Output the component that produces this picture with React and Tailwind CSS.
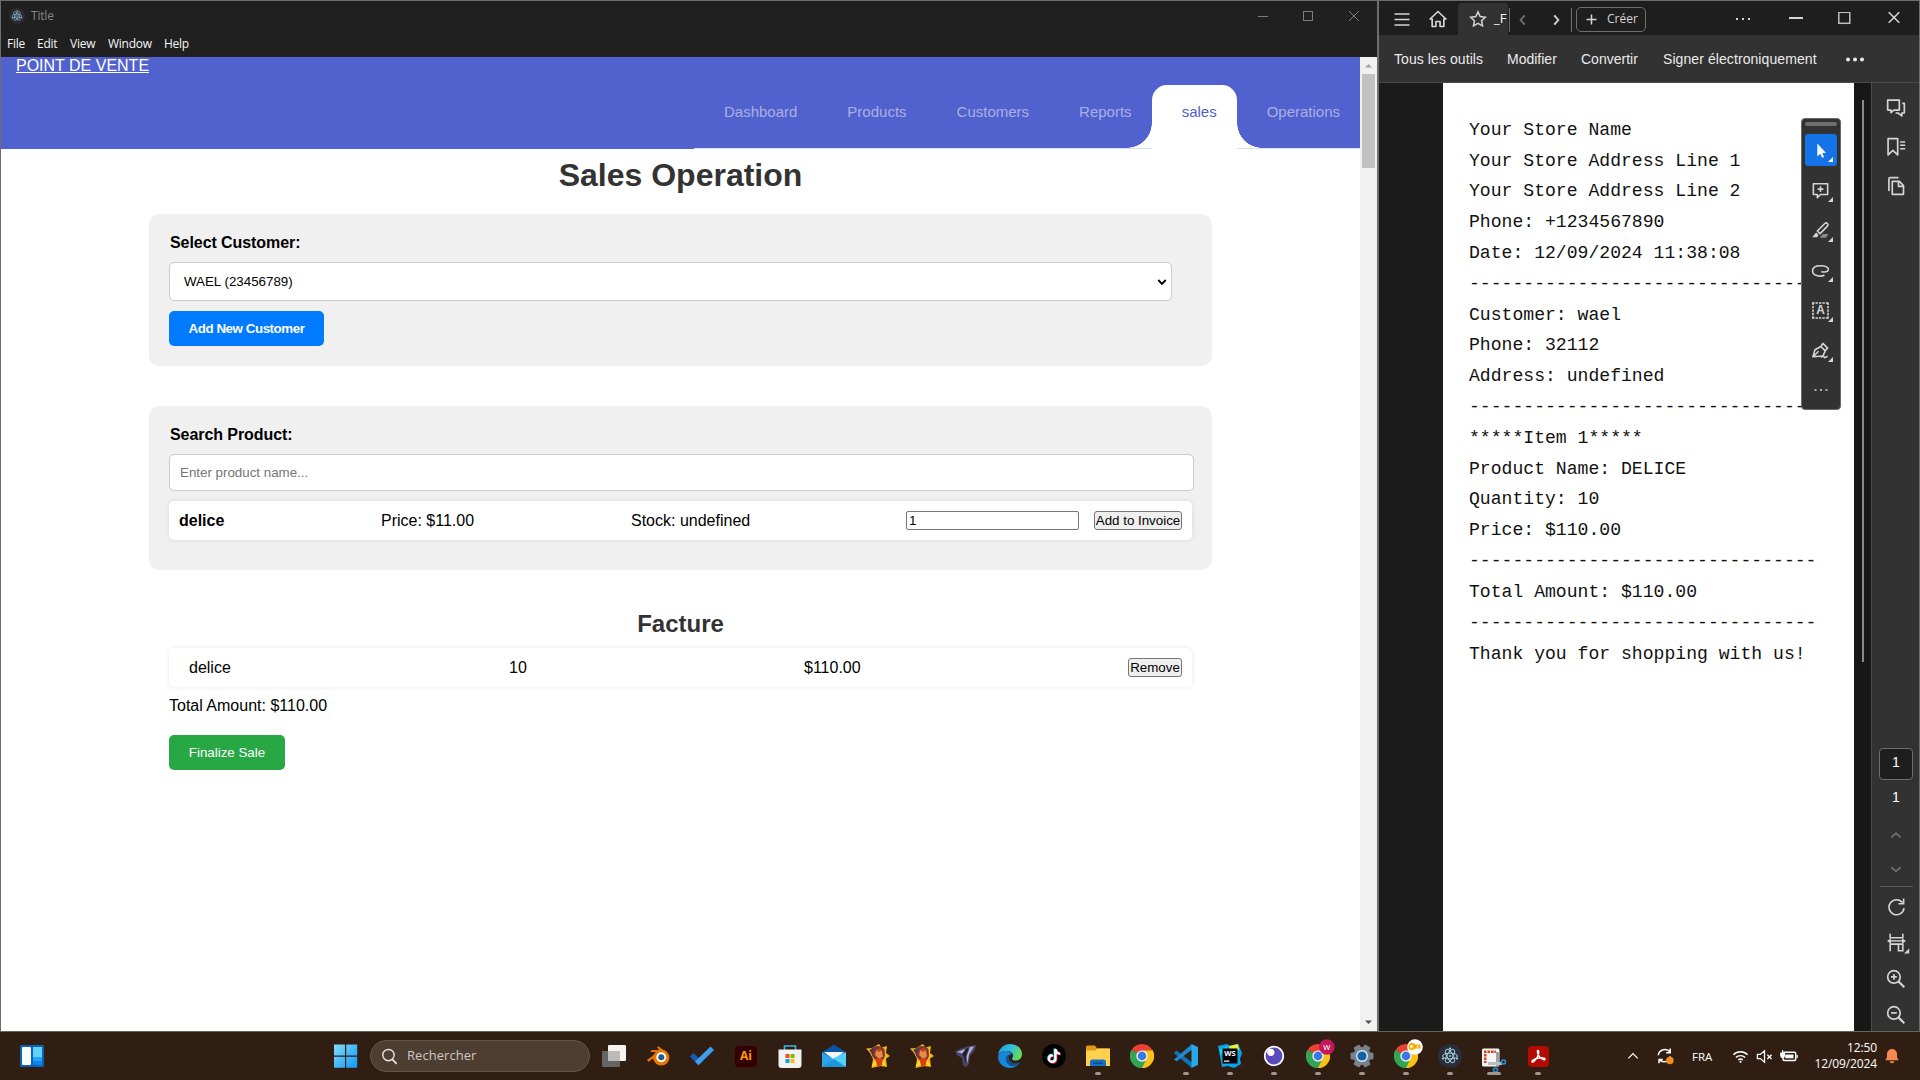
import React from "react";

const UI = "font-['Open_Sans','Noto_Sans',sans-serif]";
const ARIAL = "font-['Liberation_Sans',Arial,sans-serif]";

function Svg({ size = 24, vb = 24, children, className = "" }) {
  return (
    <svg
      width={size}
      height={size}
      viewBox={`0 0 ${vb} ${vb}`}
      fill="none"
      stroke="currentColor"
      strokeWidth="2"
      className={`block shrink-0 ${className}`}
    >
      {children}
    </svg>
  );
}

/* ---------- Logos ---------- */

function ElectronMark({ size, ring = "#9fd0da", bg = "#2b2e3a" }) {
  return (
    <Svg size={size}>
      <circle cx="12" cy="12" r="12" fill={bg} stroke="none" />
      <g stroke={ring} strokeWidth="1">
        <ellipse cx="12" cy="12" rx="7.4" ry="2.9" />
        <ellipse cx="12" cy="12" rx="7.4" ry="2.9" transform="rotate(60 12 12)" />
        <ellipse cx="12" cy="12" rx="7.4" ry="2.9" transform="rotate(120 12 12)" />
      </g>
      <g fill={ring} stroke="none">
        <circle cx="12" cy="12" r="1" />
        <circle cx="5" cy="14.6" r="1.1" />
        <circle cx="19" cy="14.6" r="1.1" />
        <circle cx="12" cy="4.6" r="1.1" />
      </g>
    </Svg>
  );
}

function Chrome({ badge }) {
  return (
    <Svg className="overflow-visible">
      <g stroke="none">
        <path d="M12 12 1.6 6A12 12 0 0 1 22.4 6z" fill="#e94235" />
        <path d="M12 12 22.4 6A12 12 0 0 1 12 24z" fill="#fbbc05" />
        <path d="M12 12V24A12 12 0 0 1 1.6 6z" fill="#33a453" />
        <path d="M12 6.5H22.7A12 12 0 0 1 12 24L17 14.6z" fill="#fbc116" />
        <path d="M1.6 6 7 15l5 2.6 3.6-.8L12 24A12 12 0 0 1 1.6 6z" fill="#33a453" />
        <circle cx="12" cy="12" r="5.6" fill="#fff" />
        <circle cx="12" cy="12" r="4.4" fill="#3b78e7" />
        {badge === "w" && (
          <>
            <circle cx="20.8" cy="3" r="7.8" fill="#c2185b" />
            <text x="20.8" y="5.8" textAnchor="middle" fontSize="9" fill="#fff" fontFamily="Open Sans">w</text>
          </>
        )}
        {badge === "key" && (
          <>
            <circle cx="21" cy="3" r="7.8" fill="#fff" />
            <circle cx="18" cy="2.4" r="3.6" fill="#f9b50b" />
            <circle cx="17.4" cy="2.4" r="1.3" fill="#fff" />
            <path d="M20 .5h6.5v4H20z" fill="#f9a80b" />
            <circle cx="23.500" cy="2.500" r="1" fill="#fff" />
          </>
        )}
      </g>
    </Svg>
  );
}

function TaskView() {
  return (
    <Svg>
      <g stroke="none">
        <rect x="0" y="7" width="18" height="16" rx="1" fill="#676563" />
        <rect x="6" y="1" width="18" height="16" rx="1" fill="#f4f3f2" />
        <rect x="6" y="7" width="12" height="10" fill="#bdbbba" />
      </g>
    </Svg>
  );
}

function Blender() {
  return (
    <Svg>
      <g stroke="none">
        <circle cx="15.3" cy="13.6" r="8" fill="#ea7600" />
        <path d="M1 16 12 8H4.500l1-2h8L11 3.500l1.500-1.200L21 9l-8 7-7-1-3.500 3z" fill="#ea7600" />
        <circle cx="15.3" cy="13.2" r="5" fill="#fff" />
        <circle cx="15.3" cy="13.2" r="3" fill="#265787" />
      </g>
    </Svg>
  );
}

function Todo() {
  return (
    <Svg>
      <g stroke="none">
        <path d="M0 12.500 3.600 9l8.600 8.500-3.700 3.700z" fill="#195abd" />
        <path d="M5 17.500 20.500 2.500 24 6 8.500 21.200z" fill="#3f9ef0" />
      </g>
    </Svg>
  );
}

function Illustrator() {
  return (
    <div className="flex h-[21px] w-[22px] items-center justify-center rounded-[4px] bg-[#330000] font-['Open_Sans',sans-serif] text-[12px] font-bold leading-none text-[#ff9a00]">
      Ai
    </div>
  );
}

function Store() {
  return (
    <Svg>
      <path d="M6.500 6V2h11v4" stroke="#35b5f0" strokeWidth="1.600" />
      <g stroke="none">
        <path d="M.5 5.500h23V21a3 3 0 0 1-3 3h-17a3 3 0 0 1-3-3z" fill="#f3f2f1" />
        <rect x="7.500" y="10" width="4" height="4" fill="#f25022" />
        <rect x="12.500" y="10" width="4" height="4" fill="#7fba00" />
        <rect x="7.500" y="15" width="4" height="4" fill="#00a4ef" />
        <rect x="12.500" y="15" width="4" height="4" fill="#ffb900" />
      </g>
    </Svg>
  );
}

function Mail() {
  return (
    <Svg>
      <g stroke="none">
        <path d="M0 8 12 .8 24 8v6H0z" fill="#0a53a0" />
        <path d="M2 8h20l-10 8z" fill="#f5f5f5" />
        <path d="M0 8v15h24z" fill="#2aa6e8" />
        <path d="M24 8v15L10 15z" fill="#50d0fa" />
        <path d="M0 23 12 15l12 8z" fill="#1f95e0" />
      </g>
    </Svg>
  );
}

function StarMascot() {
  return (
    <Svg>
      <g stroke="none">
        <path d="m13 0 2.500 3.500L21 2l-1 7 4 3-4 2.500 1 8.500-7-1-8.500 2L7 15 4 9 0 4.500 6 4z" fill="#f3b51a" />
        <path d="M5 5C8 1 16 1 18.500 5.500L19 12l-2 4-7 1-4-5z" fill="#7a3a2c" />
        <path d="M10 6.500c2-2 5-1.500 6 .5l1 5.500-4 2.500-4-4z" fill="#e8894a" />
        <path d="M3 6 8 4.500 7 11z" fill="#4b3560" />
        <path d="M10 6c2-2 5-2 6.500 0L13 8z" fill="#c2451c" />
        <path d="m9 15 7-1 2 5-5 4-4-3z" fill="#dd3d12" />
        <path d="m5.500 22 4-6 1.500 5zM17 15.500l3 6.500-4-2z" fill="#ffdf2e" />
      </g>
    </Svg>
  );
}

function Horn() {
  return (
    <Svg>
      <g stroke="none">
        <path d="M1 7.500 6 5l7-2.500L22.500 1l-2.500 6-4.500 5.500L15 20l-3.500 3.500L9 21l-1-7-5-3z" fill="#4a4568" />
        <path d="m3 8 8-3-1.500 5zM16 3l4-.5-5 8-1.500 9-1-7z" fill="#b4aed2" />
        <path d="m8 10 5-6 1.500 1-2.500 6-.5 9-1.500-7z" fill="#201c33" />
      </g>
    </Svg>
  );
}

function Edge() {
  return (
    <Svg>
      <defs>
        <linearGradient id="edgeTop" x1="0" x2="1" y1=".2" y2=".5">
          <stop offset="0" stopColor="#1b9de2" />
          <stop offset=".55" stopColor="#35c1d8" />
          <stop offset="1" stopColor="#6bdc52" />
        </linearGradient>
        <linearGradient id="edgeLow" x1="0" x2=".6" y1="0" y2="1">
          <stop offset="0" stopColor="#1b7fd0" />
          <stop offset="1" stopColor="#1590df" />
        </linearGradient>
      </defs>
      <g stroke="none">
        <path d="M.2 11C1 4 6 0 12 0c7 0 12 4.600 12 10.200 0 4-3 6.300-6.200 6.300-3.400 0-4.300-1.500-3.500-2.700C17 10 12.500 6.500 8.500 7 4 7.300 1 9 .2 11z" fill="url(#edgeTop)" />
        <path d="M.1 12.500C.5 9 4 7 8 7c3.600 0 5.600 2 5.800 3.500C10 10 8 13 9 16.500 10 20.500 16 22 21.500 19 19 22.500 15.500 24 12 24 5 24-.2 18.500.1 12.500z" fill="url(#edgeLow)" />
        <path d="M9.200 11.500C7 14 7.500 19 11.500 21.500c3.500 1.800 8 .5 10.400-2.400.4-.5.1-.9-.5-.6-4 2-10.500.5-10.500-5 0-1 .2-1.800.7-2.400z" fill="#12509a" />
      </g>
    </Svg>
  );
}

function TikTok() {
  const note = "M12.300 5h2.300c.2 2 1.500 3.300 3.400 3.500v2.300c-1.300 0-2.400-.4-3.400-1.100v5a4.400 4.400 0 1 1-4.400-4.400l.7.100v2.300a2.100 2.100 0 1 0 1.400 2z";
  return (
    <Svg>
      <g stroke="none">
        <circle cx="12" cy="12" r="12" fill="#000" />
        <path d={note} fill="#25f4ee" transform="translate(-.7 -.5)" />
        <path d={note} fill="#fe2c55" transform="translate(.8 .6)" />
        <path d={note} fill="#fff" />
      </g>
    </Svg>
  );
}

function Explorer() {
  return (
    <Svg>
      <g stroke="none">
        <path d="M0 3a1.500 1.500 0 0 1 1.500-1.500H9l2 3h11.500A1.500 1.500 0 0 1 24 6v6H0z" fill="#e09a12" />
        <path d="M0 6.500h9l2.500-2H24V22H0z" fill="#ffd04d" />
        <path d="M4 22v-4a2.500 2.500 0 0 1 2.500-2.500h11A2.500 2.500 0 0 1 20 18v4z" fill="#1271c4" />
        <rect x="7" y="18.500" width="10" height="1.500" rx=".7" fill="#0b4a86" />
      </g>
    </Svg>
  );
}

function VSCode() {
  return (
    <Svg>
      <g stroke="none">
        <path d="M0 8.500 2.500 6.500 18 18.500V24L1 10z" fill="#0e76bd" />
        <path d="M0 15.500 2.500 17.500 18 5.500V0z" fill="#1b8ad3" />
        <path d="m17.500 0 6.500 3v18l-6.500 3z" fill="#28a8ea" />
      </g>
    </Svg>
  );
}

function WebStorm() {
  return (
    <Svg>
      <g stroke="none">
        <path d="M0 2 9 0l3 2 8-2 4 9-2 6 1 5-7 4-6-2-6 1L2 12z" fill="#07a5ee" />
        <path d="m11 2 9-2 1 6-9 2z" fill="#e6ef3b" />
        <path d="m2 5 8-3-1 4-7 5z" fill="#21d0e8" />
        <rect x="4.500" y="4.500" width="15" height="15" fill="#000" />
        <rect x="6" y="16.500" width="5.500" height="1.200" fill="#fff" />
        <text x="12" y="12.300" textAnchor="middle" fontSize="7.500" fontWeight="700" fill="#fff" fontFamily="Open Sans">WS</text>
      </g>
    </Svg>
  );
}

function Insomnia() {
  return (
    <Svg>
      <circle cx="12" cy="12" r="9.300" fill="#5849be" stroke="#fff" strokeWidth="1.800" />
      <circle cx="8.800" cy="8.300" r="3.600" fill="#fff" stroke="none" />
    </Svg>
  );
}

function Gear() {
  return (
    <Svg>
      <g stroke="none">
        <g fill="#77828c">
          <circle cx="12" cy="12" r="9" />
          {[0, 60, 120].map((a) => (
            <rect key={a} x="8.500" y="0.500" width="7" height="23" rx="1.500" transform={`rotate(${a + 30} 12 12)`} />
          ))}
        </g>
        <circle cx="12" cy="12" r="6" fill="#e4e8eb" />
        <circle cx="12" cy="12" r="4.600" fill="#0f62ab" />
      </g>
    </Svg>
  );
}

function Snip() {
  return (
    <Svg className="translate-y-[3px] overflow-visible">
      <g stroke="none">
        <rect x="0" y="1.500" width="17.500" height="18" rx="1.500" fill="#f4f4f4" />
        <path d="M2 3.500h2.500v2.500H2zM5.500 3.500H8v2.500H5.500zM9 3.500h2.500v2.500H9zM12.300 3.500h1.500v2.500h-1.500zM2 7h2.500v2.500H2zM2 10.500h2.500V13H2zM2 14h2.500v2H2z" fill="#d83b1b" />
        <path d="M14 5h3v14h-3z" fill="#9ba4aa" />
        <path d="M6 15h14v3H6z" fill="#b8c0c5" />
      </g>
      <circle cx="21.500" cy="15" r="2" stroke="#1d94dc" strokeWidth="1.600" />
      <circle cx="13.500" cy="23" r="2" stroke="#1d94dc" strokeWidth="1.600" />
    </Svg>
  );
}

function Acrobat() {
  return (
    <div className="flex h-[21px] w-[21px] items-center justify-center rounded-[4px] bg-[#b30b00]">
      <Svg size={17}>
        <path
          d="M11 3.500c2.500 0 1.500 5-1 9.500S4.500 21 3 19.800s2-4 8-5.300 10.500-.6 10.200 1.200-3.700 1-7-2.500-4.800-9.700-3.200-9.700z"
          stroke="#fff"
          strokeWidth="1.900"
        />
      </Svg>
    </div>
  );
}

/* ---------- Taskbar ---------- */

const apps = [
  { icon: <TaskView /> },
  { icon: <Blender /> },
  { icon: <Todo /> },
  { icon: <Illustrator /> },
  { icon: <Store /> },
  { icon: <Mail /> },
  { icon: <StarMascot /> },
  { icon: <StarMascot /> },
  { icon: <Horn /> },
  { icon: <Edge /> },
  { icon: <TikTok /> },
  { icon: <Explorer />, run: "w-1.5" },
  { icon: <Chrome /> },
  { icon: <VSCode />, run: "w-1.5" },
  { icon: <WebStorm />, run: "w-1.5" },
  { icon: <Insomnia />, run: "w-1.5" },
  { icon: <Chrome badge="w" />, run: "w-1.5" },
  { icon: <Gear />, run: "w-1.5" },
  { icon: <Chrome badge="key" />, run: "w-1.5" },
  { icon: <ElectronMark size={24} />, run: "w-1.5" },
  { icon: <Snip />, run: "w-3.5" },
  { icon: <Acrobat />, run: "w-1.5" },
];

function Taskbar() {
  return (
    <div className={`flex h-[49px] shrink-0 items-center border-t border-[#6a625d] bg-[#311e12] text-white ${UI}`}>
      <Svg className="ml-5">
        <g stroke="none">
          <rect x="0" y="1" width="24" height="22" rx="1.500" fill="#0b63b8" />
          <rect x="2" y="3" width="9" height="18" rx="1" fill="#fafafa" />
          <rect x="13" y="3" width="9" height="10" fill="#62d2fb" />
          <rect x="13" y="13" width="9" height="4" fill="#1ea5f5" />
          <rect x="13" y="17" width="9" height="4" fill="#0b84ee" />
        </g>
      </Svg>
      <Svg className="ml-[290px]">
        <defs>
          <linearGradient id="win" x1="0" y1="0" x2="24" y2="24" gradientUnits="userSpaceOnUse">
            <stop offset="0" stopColor="#84dcfb" />
            <stop offset="1" stopColor="#0a97f5" />
          </linearGradient>
        </defs>
        <path d="M0 .5h11v11H0zM12.200.5h11v11h-11zM0 12.700h11v11H0zM12.200 12.700h11v11h-11z" fill="url(#win)" stroke="none" />
      </Svg>
      <div className="ml-3 flex h-8 w-[220px] items-center rounded-full border border-[#635348] bg-[#4e3d31] pl-2.5">
        <Svg size={17} className="text-[#e8e4e1]">
          <circle cx="10.500" cy="10" r="8" />
          <path d="m16 16 6 6.500" strokeWidth="2.400" />
        </Svg>
        <span className="ml-[9px] text-[13px] tracking-[0.05px] text-[#cfc9c4]">Rechercher</span>
      </div>
      <div className="ml-0.5 flex">
        {apps.map((a, i) => (
          <div key={i} className="relative flex h-12 w-11 items-center justify-center">
            {a.icon}
            {a.run && <span className={`absolute bottom-[5px] h-[3px] rounded-full bg-[#a0968f] ${a.run}`} />}
          </div>
        ))}
      </div>
      <div className="ml-auto flex h-full items-center">
        <Svg size={14} className="text-white">
          <path d="m4 16 8-8 8 8" />
        </Svg>
        <Svg size={18} className="ml-4 text-white">
          <path d="M3 11a9 9 0 0 1 16-4M19 2v5.500h-5.500M19 12.500A8.500 8.500 0 0 1 4.500 17M4 21.500V16.500h5" />
          <circle cx="18.500" cy="18" r="5" fill="#f58a1f" stroke="none" />
        </Svg>
        <span className="ml-[18px] mt-px w-[23px] text-[11.500px]">FRA</span>
        <Svg size={17} className="ml-[17px]">
          <path d="M2 9.500a14 14 0 0 1 20 0M5.500 13.500a9 9 0 0 1 13 0M8.800 17a4.600 4.600 0 0 1 6.400 0" />
          <circle cx="12" cy="19.500" r="1.500" fill="#fff" stroke="none" />
        </Svg>
        <Svg size={17} className="ml-[7px]">
          <path d="M2 9h4l6-5v16l-6-5H2zM16 9.500l6 6M22 9.500l-6 6" strokeWidth="1.800" />
        </Svg>
        <Svg size={18} className="ml-[7px]">
          <rect x="4" y="7" width="17" height="11" rx="2" />
          <path d="M7 10h11v5H7z" fill="#fff" stroke="none" />
          <path d="M23 10.500v4M3.500 4v4M1 8h5v3.500a2.500 2.500 0 0 1-5 0z" fill="#fff" strokeWidth="1.400" />
        </Svg>
        <div className="ml-3.5 w-[65px] text-right text-[12px] leading-4 tracking-[-0.12px]">
          <div>12:50</div>
          <div>12/09/2024</div>
        </div>
        <Svg size={16} className="ml-[7px] mr-5">
          <path d="M12 1.500a7.500 7.500 0 0 0-7.500 7.500v5L2 18.500h20L19.500 14V9A7.500 7.500 0 0 0 12 1.500zM8.500 20a3.500 3 0 0 0 7 0z" fill="#f5874f" stroke="none" />
        </Svg>
      </div>
    </div>
  );
}

/* ---------- Sales window ---------- */

const tabs = ["Dashboard", "Products", "Customers", "Reports", "sales", "Operations"];

function NavTab({ label }) {
  if (label !== "sales") {
    return (
      <div className="flex h-16 items-center border-b border-[#dee2e6] pb-[9px] pl-[30px] pr-5 text-[15px] text-white/50">
        {label}
      </div>
    );
  }
  return (
    <div className="relative flex h-16 w-[85px] items-center rounded-t-[15px] bg-white pb-2.5 pl-[30px] text-[15px] text-[#5161ce]">
      {label}
      <span className="absolute -left-[25px] bottom-px h-[25px] w-[25px] bg-[radial-gradient(circle_at_0_0,transparent_24.500px,white_25px)]" />
      <span className="absolute -right-[25px] bottom-px h-[25px] w-[25px] bg-[radial-gradient(circle_at_100%_0,transparent_24.500px,white_25px)]" />
    </div>
  );
}

const SMALL_BTN =
  "flex h-[19px] items-center justify-center rounded-[3px] border border-[#767676] bg-[#efefef] text-[13.333px] leading-none text-black";

function SalesWindow() {
  return (
    <div className="flex h-[1031px] w-[1378px] flex-col border-l border-r border-t border-[#6d6d6d] bg-[#202020]">
      <div className={`flex h-7 items-center pl-2 pt-px text-[12px] text-[#868686] ${UI}`}>
        <ElectronMark size={16} bg="#292c37" ring="#8fb4c0" />
        <span className="ml-1.5 tracking-[-0.2px]">Title</span>
        <div className="ml-auto mr-[17px] flex items-center text-[#7c7c7c]">
          <Svg size={12} vb={12}><path d="M1 6.500h10" strokeWidth="1" /></Svg>
          <Svg size={12} vb={12} className="ml-[33px]"><rect x="1.500" y="1.500" width="9" height="9" strokeWidth="1" /></Svg>
          <Svg size={12} vb={12} className="ml-[34px]"><path d="m1 1 10 10M11 1 1 11" strokeWidth="1" /></Svg>
        </div>
      </div>
      <div className={`flex h-7 items-center gap-3 pl-1.5 pt-0.5 text-[12px] tracking-[-0.25px] text-[#f5f5f5] ${UI}`}>
        <span className="w-[18px]">File</span>
        <span className="w-[21px]">Edit</span>
        <span className="w-[26px]">View</span>
        <span className="w-11">Window</span>
        <span className="w-[25px]">Help</span>
      </div>
      <div className={`flex min-h-0 flex-1 bg-white ${ARIAL}`}>
        <div className="flex w-[1359px] flex-col">
          <div className="flex h-[92px] justify-between bg-[#5161ce]">
            <span className="pl-[15px] text-base leading-[18px] text-white underline">POINT DE VENTE</span>
            <div className="mt-7 flex">
              {tabs.map((t) => (
                <NavTab key={t} label={t} />
              ))}
            </div>
          </div>
          <div className="ml-[148px] flex w-[1063px] flex-col">
            <h1 className="mt-2 text-center text-[32px] font-bold leading-[37px] text-[#333]">Sales Operation</h1>

            <section className="mt-5 h-[152px] rounded-[10px] bg-[#f0f0f0] px-5 pt-[19px]">
              <label className="block pl-px text-base font-bold leading-5 tracking-[-0.07px] text-black">Select Customer:</label>
              <div className="mt-[9px] flex h-[39px] w-[1003px] items-center justify-between rounded-[5px] border border-[#ccc] bg-white pl-3.5 pr-1 text-[13.333px] text-black">
                <span>WAEL (23456789)</span>
                <Svg size={10} vb={10}><path d="m1.300 3 3.700 3.800L8.700 3" strokeWidth="1.900" /></Svg>
              </div>
              <button className="mt-2.5 block h-[35px] w-[155px] rounded-[5px] bg-[#007bff] text-[13.333px] font-bold tracking-[-0.44px] text-white">
                Add New Customer
              </button>
            </section>

            <section className="mt-10 h-[164px] rounded-[10px] bg-[#f0f0f0] px-5 pt-[19px]">
              <label className="block pl-px text-base font-bold leading-5 tracking-[-0.07px] text-black">Search Product:</label>
              <div className="mt-[9px] flex h-[37px] w-[1025px] items-center rounded-[5px] border border-[#ccc] bg-white pl-2.5 text-[13.333px] text-[#757575]">
                Enter product name...
              </div>
              <div className="mt-2.5 flex h-[39px] items-center rounded-[5px] bg-white pl-2.5 text-base text-black shadow-[0_0_5px_rgba(0,0,0,0.1)]">
                <span className="w-[202px] font-bold">delice</span>
                <span className="w-[250px]">Price: $11.00</span>
                <span className="w-[275px]">Stock: undefined</span>
                <span className="flex h-[19px] w-[173px] items-center rounded-[2px] border border-[#767676] bg-white pl-0.5 text-[13.333px]">1</span>
                <span className={`ml-[15px] w-[88px] ${SMALL_BTN}`}>Add to Invoice</span>
              </div>
            </section>

            <section className="px-5">
              <h2 className="mt-10 text-center text-2xl font-bold leading-7 text-[#333]">Facture</h2>
              <div className="mt-2.5 flex h-[39px] items-center rounded-[5px] bg-white pl-5 text-base text-black shadow-[0_0_5px_rgba(0,0,0,0.1)]">
                <span className="w-80">delice</span>
                <span className="w-[295px]">10</span>
                <span className="w-[324px]">$110.00</span>
                <span className={`w-[54px] ${SMALL_BTN}`}>Remove</span>
              </div>
              <p className="mt-2.5 text-base leading-[18px] text-black">Total Amount: $110.00</p>
              <button className="mt-5 block h-[35px] w-[116px] rounded-[5px] bg-[#28a745] text-[13.333px] text-white">
                Finalize Sale
              </button>
            </section>
          </div>
        </div>
        <div className="flex w-[17px] flex-col items-center bg-[#f1f1f1]">
          <Svg size={17} vb={17}><path d="M5 10.500h7L8.500 7z" fill="#a3a3a3" stroke="none" /></Svg>
          <div className="h-[94px] w-[13px] bg-[#c1c1c1]" />
          <Svg size={17} vb={17} className="mt-auto"><path d="M5 6.500h7L8.500 10z" fill="#505050" stroke="none" /></Svg>
        </div>
      </div>
    </div>
  );
}

/* ---------- PDF viewer ---------- */

const DASHES = "-".repeat(32);
const receipt = [
  "Your Store Name",
  "Your Store Address Line 1",
  "Your Store Address Line 2",
  "Phone: +1234567890",
  "Date: 12/09/2024 11:38:08",
  DASHES,
  "Customer: wael",
  "Phone: 32112",
  "Address: undefined",
  DASHES,
  "*****Item 1*****",
  "Product Name: DELICE",
  "Quantity: 10",
  "Price: $110.00",
  DASHES,
  "Total Amount: $110.00",
  DASHES,
  "Thank you for shopping with us!",
];

const tools = [
  <path key="s" d="M8 3v16.500l3.700-3.300 2.300 5 2.500-1.100-2.300-5H19z" fill="#fff" stroke="none" />,
  <g key="c">
    <path d="M3 3.500h18v13.500h-9L8 21v-4H3z" strokeLinejoin="round" />
    <path d="M12 6.500v7.500M8.300 10.300h7.400" />
  </g>,
  <g key="h">
    <path d="M11 21 15 16.500h7L19 21z" fill="#8b8b8b" stroke="none" />
    <path d="M17.500 3.200a2.200 2.200 0 0 1 3.200 3.200L11.500 16 8 12.600z" strokeLinejoin="round" />
    <path d="M6.500 14.500 9.500 17.500 8 20.500H1.500z" fill="currentColor" stroke="none" />
  </g>,
  <path key="l" d="M17 18c-6 2.500-15 .5-15-5.500 0-4 4-6.500 10-6.500 6.500 0 10.500 2 10 5-.5 2.500-4 3.300-9 2.500" />,
  <g key="t">
    <path d="M1.500 2.500h21M1.500 21.500h21" strokeDasharray="3 1.300" />
    <path d="M2.500 2v20M21.500 2v20" strokeDasharray="3 1.300" />
    <text x="12" y="17" textAnchor="middle" fontSize="15" fontWeight="700" fill="currentColor" stroke="none" fontFamily="Liberation Sans">A</text>
  </g>,
  <g key="p" strokeLinejoin="round">
    <path d="M2.500 20 5 11l7.500-4 5.500 5.500-3 6.500zM3 19.500l6.500-6.500M12.500 7 15 3l6 6-3.500 3.500" />
    <path d="M13 21c2-3 3-3 3.500-1s1.500 1 4.500-1" />
  </g>,
];

function PdfWindow() {
  return (
    <div className="flex h-[1031px] w-[542px] flex-col border-l border-r border-t border-[#6d6d6d] bg-[#1e1e1e] text-[#d5d5d5]">
      <div className={`flex h-[34px] shrink-0 items-center ${UI}`}>
        <Svg size={16} vb={16} className="ml-[15px] mt-0.5"><path d="M.5 3h15M.5 8.500h15M.5 14h15" strokeWidth="1.600" /></Svg>
        <Svg size={20} className="ml-[18px] mt-0.5">
          <path d="M2.500 12 12 3l9.500 9H19v9h-4.500v-6h-5v6H5v-9z" strokeLinejoin="round" />
        </Svg>
        <div className="ml-2.5 flex h-8 w-[50px] items-center self-end rounded-t-[3px] bg-[#323232]">
          <Svg size={18} className="ml-[11px]">
            <path d="m12 2.500 2.900 6.300 6.800.8-5 4.700 1.300 6.800-6-3.400-6 3.400 1.300-6.800-5-4.700 6.800-.8z" />
          </Svg>
          <span className="ml-[7px] text-[13px] text-white">_F</span>
        </div>
        <span className="ml-px mt-1 h-6 w-px bg-[#6e6e6e]" />
        <Svg size={14} className="ml-[6px] mt-1 text-[#6e6e6e]"><path d="m15 4-7 8 7 8" strokeWidth="3.200" /></Svg>
        <Svg size={14} className="ml-[19px] mt-1"><path d="m9 4 7 8-7 8" strokeWidth="3.200" /></Svg>
        <span className="ml-2 mt-1 h-6 w-px bg-[#6e6e6e]" />
        <div className="ml-1 mt-0.5 flex h-[25px] w-[70px] items-center rounded-[5px] border border-[#6e6e6e] pl-[9px]">
          <Svg size={11} vb={11}><path d="M5.500 .5v10M.5 5.500h10" strokeWidth="1.500" /></Svg>
          <span className="ml-[10px] text-[12px]">Créer</span>
        </div>
        <Svg size={16} vb={16} className="ml-[89px] mt-0.5">
          <path d="M1 8h2M7 8h2M13 8h2" strokeWidth="1.800" />
        </Svg>
        <Svg size={14} vb={14} className="ml-[38px]"><path d="M0 7h14" strokeWidth="2" /></Svg>
        <Svg size={13} vb={13} className="ml-[35px] text-[#bdbdbd]"><rect x=".8" y=".3" width="11" height="11" strokeWidth="1.500" /></Svg>
        <Svg size={12} vb={12} className="ml-[37px]"><path d="m.7.2 10.600 10.600M11.300.2.7 10.800" strokeWidth="1.500" /></Svg>
      </div>
      <div className={`flex h-[48px] shrink-0 items-center border-b border-[#4b4b4b] bg-[#323232] pl-[15px] text-[14px] text-[#ebebeb] ${ARIAL}`}>
        <span className="mt-px w-[113px] tracking-[0.08px]">Tous les outils</span>
        <span className="mt-px w-[74px]">Modifier</span>
        <span className="mt-px w-[82px]">Convertir</span>
        <span className="mt-px w-[182px] tracking-[0.08px]">Signer électroniquement</span>
        <Svg size={20} vb={20}>
          <g fill="currentColor" stroke="none">
            <circle cx="3" cy="10.500" r="2" />
            <circle cx="10" cy="10.500" r="2" />
            <circle cx="17" cy="10.500" r="2" />
          </g>
        </Svg>
      </div>
      <div className="flex min-h-0 flex-1">
        <div className="w-16 bg-[#1b1b1b]" />
        <div className="relative w-[411px] bg-white">
          <div className="whitespace-pre pl-[26px] pt-[31.700px] font-['Liberation_Mono','Courier_New',monospace] text-[18.100px] leading-[30.820px] text-[#111]">
            {receipt.map((l, i) => (
              <div key={i}>{l}</div>
            ))}
          </div>
          <div className="absolute left-[358px] top-[35px] flex h-[292px] w-10 flex-col items-center rounded-[4px] border border-[#6a6a6a] bg-[#323232] pr-px pt-[3px]">
            <span className="h-1 w-8 rounded-sm bg-[#6e6e6e]" />
            <div className="mt-2 flex flex-col gap-2">
              {tools.map((t, i) => (
                <div
                  key={i}
                  className={`relative flex h-8 w-8 items-center justify-center rounded-[3px] ${i === 0 ? "bg-[#1473e6] text-white" : ""}`}
                >
                  <Svg size={19}>{t}</Svg>
                  <Svg size={5} vb={5} className="absolute bottom-1 right-1">
                    <path d="M5 0v5H0z" fill="currentColor" stroke="none" />
                  </Svg>
                </div>
              ))}
            </div>
            <Svg size={16} vb={16} className="mt-4"><path d="M1.500 8h2M7 8h2M12.500 8h2" strokeWidth="1.600" /></Svg>
          </div>
        </div>
        <div className="flex w-[17px] justify-center bg-[#171717] pt-[17px]">
          <div className="h-[562px] w-0.5 bg-[#8a8a8a]" />
        </div>
        <div className={`flex w-12 flex-col items-center border-l border-[#4b4b4b] bg-[#323232] pl-px ${ARIAL}`}>
          <Svg size={20} className="mt-[15px]">
            <path d="M2 2.500h14v12H9.500L6 17.500v-3H2zM19.500 6.500H22V18h-3v3.500L14.500 18H11.500" strokeLinejoin="round" />
          </Svg>
          <Svg size={20} className="mt-[19px]">
            <path d="M2.500 2h11.500v19.500L8.200 16l-5.700 5.500z" strokeLinejoin="round" />
            <path d="M17 6h6M17 10h6M17 14h6" strokeWidth="1.800" />
          </Svg>
          <Svg size={20} className="mt-[19px]">
            <path d="M7.500 6.500h8.500l5 5V22H7.500zM15 7v5.500h6" strokeLinejoin="round" />
            <path d="M3.500 18V3.500a1.500 1.500 0 0 1 1.500-1.500H15" />
          </Svg>
          <div className="mt-auto flex h-[32px] w-[34px] items-center justify-center rounded-[4px] border border-[#6e6e6e] bg-[#1e1e1e] pb-1 text-[14px] text-white">1</div>
          <span className="mt-[7px] text-[14px] leading-5 text-white">1</span>
          <Svg size={14} className="mt-[21px] text-[#6e6e6e]"><path d="m4 16 8-7 8 7" strokeWidth="3.200" /></Svg>
          <Svg size={14} className="mt-5 text-[#6e6e6e]"><path d="m4 9 8 7 8-7" strokeWidth="3.200" /></Svg>
          <span className="mt-2.5 h-px w-[33px] bg-[#5a5a5a]" />
          <Svg size={19} className="mt-2.5"><path d="M19.500 7A9.500 9.500 0 1 0 21.500 14M21 2v6.500h-6.500" /></Svg>
          <Svg size={19} className="mt-[17px] overflow-visible">
            <path d="M4 1v5h16V1M4 23v-9h16v8.500h-5.500V14" />
            <path d="M3 10h18" strokeWidth="1.800" />
            <path d="M0 10 5 6.500v7zM24 10 19 6.500v7z" fill="currentColor" stroke="none" />
            <path d="M28 19.500V26h-6.500z" fill="currentColor" stroke="none" />
          </Svg>
          <Svg size={20} className="mt-[17px]">
            <circle cx="9.500" cy="9.500" r="7.500" />
            <path d="m15 15 7 7" strokeWidth="2.600" />
            <path d="M9.500 6v7M6 9.500h7" />
          </Svg>
          <Svg size={20} className="mb-1.5 mt-4">
            <circle cx="9.500" cy="9.500" r="7.500" />
            <path d="m15 15 7 7" strokeWidth="2.600" />
            <path d="M6 9.500h7" />
          </Svg>
        </div>
      </div>
    </div>
  );
}

export default function App() {
  return (
    <div className="flex h-[1080px] w-[1920px] flex-col overflow-hidden bg-[#311e12]">
      <div className="flex">
        <SalesWindow />
        <PdfWindow />
      </div>
      <Taskbar />
    </div>
  );
}
